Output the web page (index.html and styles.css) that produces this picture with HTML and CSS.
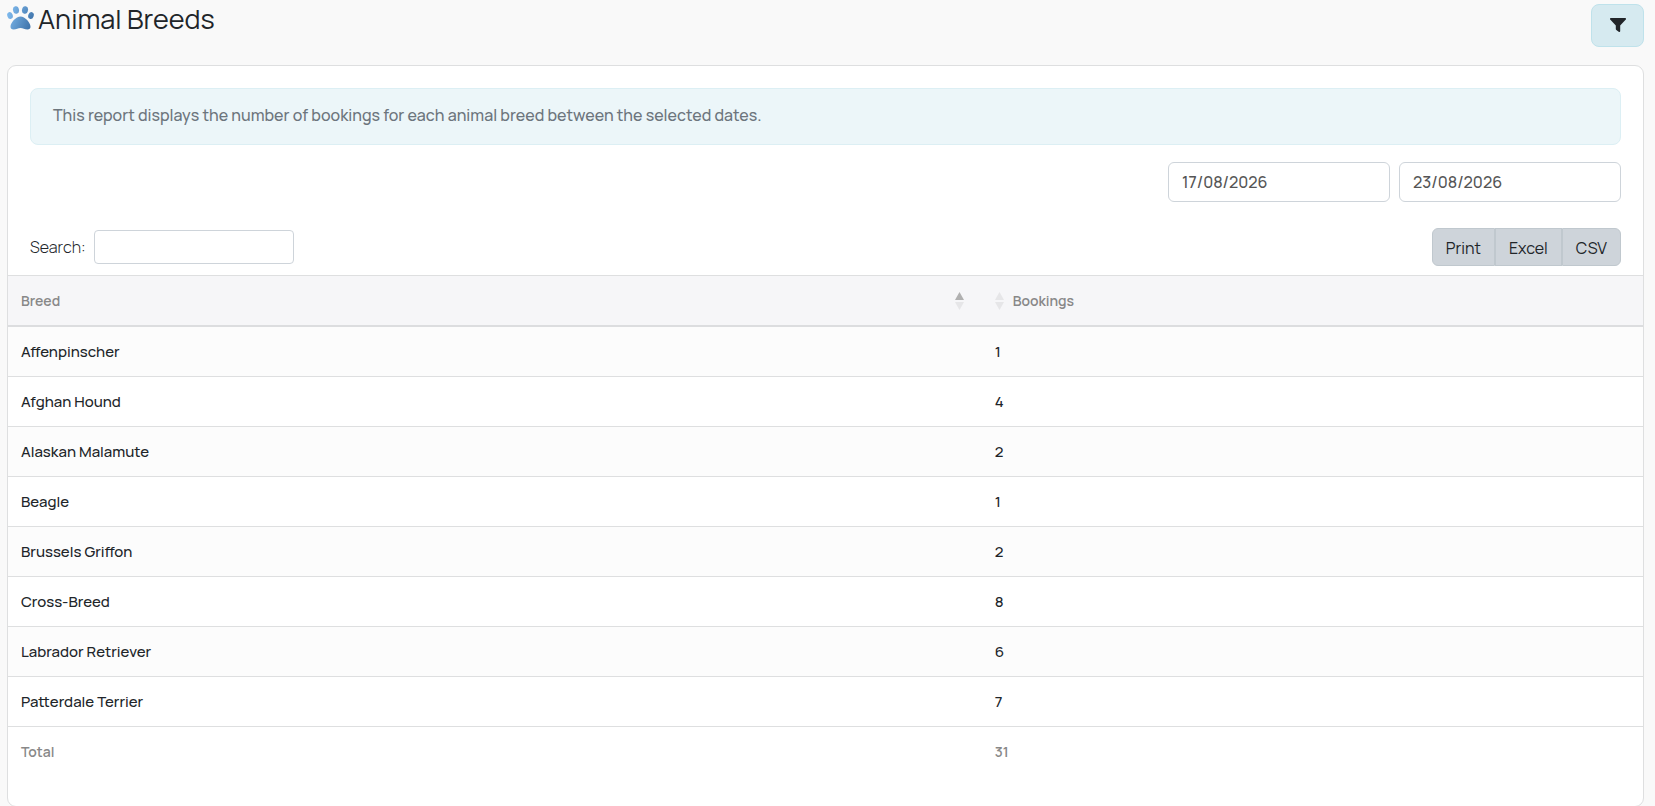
FILE: index.html
```html
<!DOCTYPE html>
<html lang="en">
<head>
  <meta charset="UTF-8" />
  <meta name="viewport" content="width=device-width, initial-scale=1.0"/>
  <title>Animal Breeds</title>
  <link rel="stylesheet" href="styles.css">
</head>
<body>
  <header class="page-header">
    <h1>
      <svg class="paw" viewBox="0 0 27 24" aria-hidden="true">
        <defs>
          <linearGradient id="pawFill" gradientUnits="userSpaceOnUse" x1="0" y1="6" x2="27" y2="18">
            <stop offset="0" stop-color="#82bdf0"/>
            <stop offset="1" stop-color="#3a6ea5"/>
          </linearGradient>
        </defs>
        <g fill="url(#pawFill)">
          <ellipse cx="3" cy="9.500" rx="2.700" ry="3.500" transform="rotate(-20 3 9.500)"/>
          <ellipse cx="9" cy="4" rx="3" ry="3.800" transform="rotate(-12 9 4)"/>
          <ellipse cx="18" cy="4" rx="3" ry="3.800" transform="rotate(12 18 4)"/>
          <ellipse cx="24" cy="9.500" rx="2.700" ry="3.500" transform="rotate(20 24 9.500)"/>
          <path d="M13.500 10.500C9 10.500 3.500 16.500 3.500 20.800c0 2 1.200 2.600 3 2.600 3 0 4.500-1.400 7-1.400s4 1.400 7 1.400c1.800 0 3-.6 3-2.600 0-4.300-5.500-10.300-10-10.300z"/>
        </g>
      </svg>
      Animal Breeds
    </h1>
    <button type="button" class="filter-btn" aria-label="Filter">
      <svg viewBox="0 0 16 14" aria-hidden="true">
        <path d="M.8 0h14.400c.8 0 1.100 1 .6 1.600L10.200 7.400V13c0 .9-.9 1.200-1.500.8l-2.400-1.900c-.3-.2-.5-.5-.5-.9V7.400L.2 1.600C-.3 1 0 0 .8 0z"/>
      </svg>
    </button>
  </header>

  <main class="card">
    <div class="card-top">
      <div class="info">This report displays the number of bookings for each animal breed between the selected dates.</div>
      <div class="dates">
        <input type="text" value="17/08/2026" aria-label="Start date">
        <input type="text" value="23/08/2026" aria-label="End date">
      </div>
      <div class="toolbar">
        <div class="search">
          <label for="search">Search:</label>
          <input type="search" id="search">
        </div>
        <div class="btn-group">
          <button type="button">Print</button>
          <button type="button">Excel</button>
          <button type="button">CSV</button>
        </div>
      </div>
    </div>

    <table>
      <thead>
        <tr>
          <th class="col-breed">
            <div class="sortable spread">
              <span>Breed</span>
              <svg class="sort asc" viewBox="0 0 9 18" aria-hidden="true">
                <path class="up" d="M0 8L4.500 0 9 8z"/>
                <path class="down" d="M0 10h9l-4.500 8z"/>
              </svg>
            </div>
          </th>
          <th>
            <div class="sortable">
              <svg class="sort" viewBox="0 0 9 18" aria-hidden="true">
                <path class="up" d="M0 8L4.500 0 9 8z"/>
                <path class="down" d="M0 10h9l-4.500 8z"/>
              </svg>
              <span>Bookings</span>
            </div>
          </th>
        </tr>
      </thead>
      <tbody>
        <tr><td>Affenpinscher</td><td>1</td></tr>
        <tr><td>Afghan Hound</td><td>4</td></tr>
        <tr><td>Alaskan Malamute</td><td>2</td></tr>
        <tr><td>Beagle</td><td>1</td></tr>
        <tr><td>Brussels Griffon</td><td>2</td></tr>
        <tr><td>Cross-Breed</td><td>8</td></tr>
        <tr><td>Labrador Retriever</td><td>6</td></tr>
        <tr><td>Patterdale Terrier</td><td>7</td></tr>
      </tbody>
      <tfoot>
        <tr><th>Total</th><th>31</th></tr>
      </tfoot>
    </table>
  </main>
</body>
</html>
```

FILE: styles.css
```css
* {
  box-sizing: border-box;
}
body {
  margin: 0;
  padding: 4px 11px 0 7px;
  font-family: Manrope, Inter, sans-serif;
  font-size: 16px;
  line-height: 24px;
  background: #f9f9f9;
  color: #212529;
}
input, button {
  font: inherit;
  color: inherit;
}
.page-header {
  display: flex;
  justify-content: space-between;
  align-items: flex-start;
  margin-bottom: 18px;
}
h1 {
  display: flex;
  align-items: center;
  gap: 4px;
  margin: 0;
  font-size: 27px;
  line-height: 30px;
  font-weight: 400;
}
.paw {
  width: 27px;
  height: 24px;
  margin-bottom: 2px;
}
.filter-btn {
  display: flex;
  align-items: center;
  justify-content: center;
  width: 53px;
  height: 43px;
  padding: 0 0 2px;
  background: #d6eaf0;
  border: 1px solid #bfe2eb;
  border-radius: 8px;
  cursor: pointer;
}
.filter-btn svg {
  width: 16px;
  height: 14px;
  fill: #212529;
}
.card {
  background: #fff;
  border: 1px solid #dedfe0;
  border-radius: 9px;
  padding-bottom: 29px;
}
.card-top {
  padding: 22px 22px 9px;
}
.info {
  padding: 14px 22px 17px;
  background: #ecf6f9;
  border: 1px solid #dceff4;
  border-radius: 8px;
  color: #6c757d;
  font-weight: 500;
}
.dates {
  display: flex;
  justify-content: flex-end;
  gap: 9px;
  margin: 17px 0 26px;
}
.dates input {
  width: 222px;
  height: 40px;
  padding: 0 13px;
  border: 1px solid #ced4da;
  border-radius: 6px;
  background: #fff;
  color: #555;
  font-weight: 500;
}
.toolbar {
  display: flex;
  justify-content: space-between;
  align-items: center;
}
.search {
  display: flex;
  align-items: center;
  gap: 8px;
  font-weight: 300;
}
.search input {
  width: 200px;
  height: 34px;
  border: 1px solid #ced4da;
  border-radius: 4px;
  background: #fff;
}
.btn-group {
  display: flex;
}
.btn-group button {
  height: 38px;
  padding: 1px 13px 0;
  background: #ced4da;
  border: 1px solid #c0c8ce;
  cursor: pointer;
}
.btn-group button:first-child {
  border-radius: 6px 0 0 6px;
}
.btn-group button:last-child {
  border-radius: 0 6px 6px 0;
}
table {
  width: 100%;
  table-layout: fixed;
  border-collapse: separate;
  border-spacing: 0;
  font-size: 15px;
  font-weight: 500;
}
.col-breed {
  width: 59.55%;
}
th, td {
  height: 50px;
  padding: 0 13px;
  text-align: left;
  border-bottom: 1px solid #dedfe0;
}
th {
  font-size: 14px;
  font-weight: 600;
  color: #888;
}
thead th {
  height: 52px;
  background: #f6f6f8;
  border-top: 1px solid #dedfe0;
  border-bottom: 2px solid #dcdddf;
}
tbody tr:nth-child(odd) {
  background: #fcfcfc;
}
tfoot th {
  border-bottom: 0;
}
.sortable {
  display: flex;
  align-items: center;
  gap: 9px;
}
.spread {
  justify-content: space-between;
  padding-right: 5px;
}
.sort {
  width: 9px;
  height: 18px;
  fill: #e6e6e8;
}
.asc .up {
  fill: #b0b0b0;
}
```
